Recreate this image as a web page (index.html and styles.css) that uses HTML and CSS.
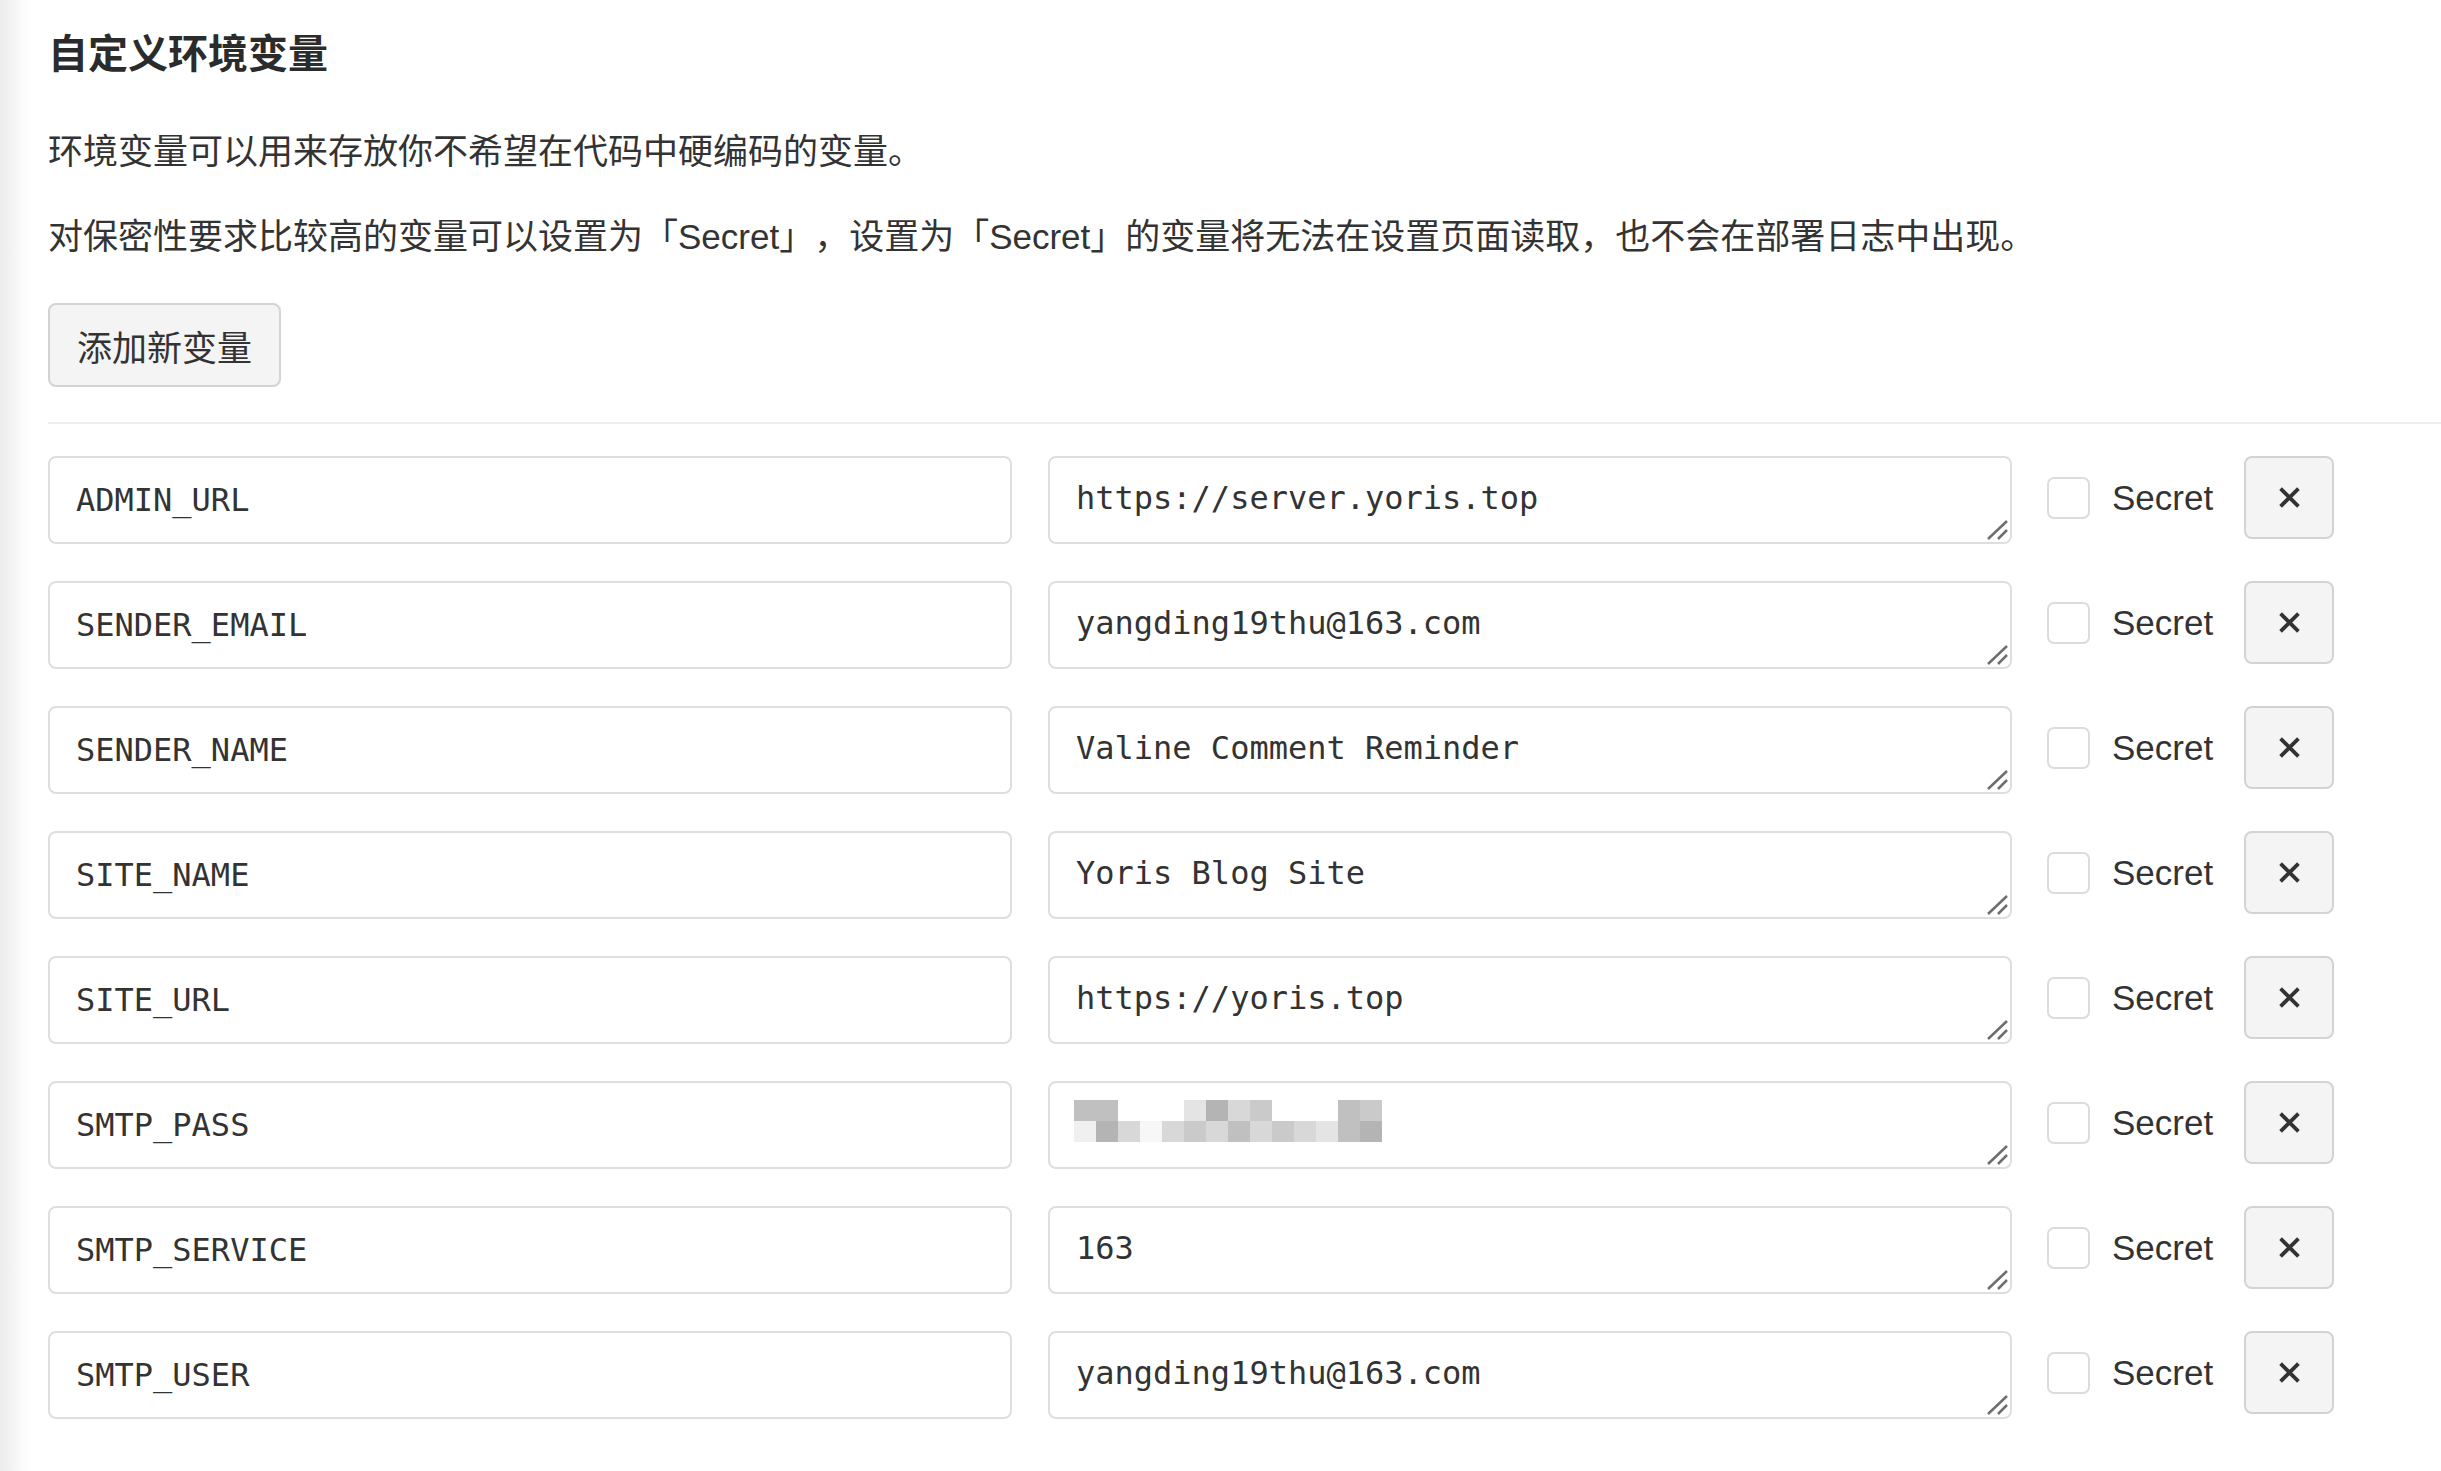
FILE: index.html
```html
<!DOCTYPE html>
<html lang="zh-CN">
<head>
<meta charset="utf-8">
<title>自定义环境变量</title>
<link rel="stylesheet" href="styles.css">
</head>
<body>
<div class="page">
  <h2 class="title">自定义环境变量</h2>
  <p class="desc">环境变量可以用来存放你不希望在代码中硬编码的变量。</p>
  <p class="desc desc-2">对保密性要求比较高的变量可以设置为「Secret」，设置为「Secret」的变量将无法在设置页面读取，也不会在部署日志中出现。</p>
  <button class="btn add-btn" type="button">添加新变量</button>
  <hr class="divider">
  <div class="env-list">

    <div class="env-row">
      <input class="env-name" type="text" value="ADMIN_URL">
      <div class="env-value-wrap">
        <textarea class="env-value">https://server.yoris.top</textarea>
        <svg class="grip" viewBox="0 0 26 26" width="26" height="26"><path d="M2 21 L21 3 M12 21 L21 12"/></svg>
      </div>
      <label class="secret"><input class="secret-box" type="checkbox"><span>Secret</span></label>
      <button class="btn del-btn" type="button"><svg viewBox="0 0 20 20" width="23" height="21"><path d="M1.5 1.5 L18.5 18.5 M18.5 1.5 L1.5 18.5"/></svg></button>
    </div>

    <div class="env-row">
      <input class="env-name" type="text" value="SENDER_EMAIL">
      <div class="env-value-wrap">
        <textarea class="env-value">yangding19thu@163.com</textarea>
        <svg class="grip" viewBox="0 0 26 26" width="26" height="26"><path d="M2 21 L21 3 M12 21 L21 12"/></svg>
      </div>
      <label class="secret"><input class="secret-box" type="checkbox"><span>Secret</span></label>
      <button class="btn del-btn" type="button"><svg viewBox="0 0 20 20" width="23" height="21"><path d="M1.5 1.5 L18.5 18.5 M18.5 1.5 L1.5 18.5"/></svg></button>
    </div>

    <div class="env-row">
      <input class="env-name" type="text" value="SENDER_NAME">
      <div class="env-value-wrap">
        <textarea class="env-value">Valine Comment Reminder</textarea>
        <svg class="grip" viewBox="0 0 26 26" width="26" height="26"><path d="M2 21 L21 3 M12 21 L21 12"/></svg>
      </div>
      <label class="secret"><input class="secret-box" type="checkbox"><span>Secret</span></label>
      <button class="btn del-btn" type="button"><svg viewBox="0 0 20 20" width="23" height="21"><path d="M1.5 1.5 L18.5 18.5 M18.5 1.5 L1.5 18.5"/></svg></button>
    </div>

    <div class="env-row">
      <input class="env-name" type="text" value="SITE_NAME">
      <div class="env-value-wrap">
        <textarea class="env-value">Yoris Blog Site</textarea>
        <svg class="grip" viewBox="0 0 26 26" width="26" height="26"><path d="M2 21 L21 3 M12 21 L21 12"/></svg>
      </div>
      <label class="secret"><input class="secret-box" type="checkbox"><span>Secret</span></label>
      <button class="btn del-btn" type="button"><svg viewBox="0 0 20 20" width="23" height="21"><path d="M1.5 1.5 L18.5 18.5 M18.5 1.5 L1.5 18.5"/></svg></button>
    </div>

    <div class="env-row">
      <input class="env-name" type="text" value="SITE_URL">
      <div class="env-value-wrap">
        <textarea class="env-value">https://yoris.top</textarea>
        <svg class="grip" viewBox="0 0 26 26" width="26" height="26"><path d="M2 21 L21 3 M12 21 L21 12"/></svg>
      </div>
      <label class="secret"><input class="secret-box" type="checkbox"><span>Secret</span></label>
      <button class="btn del-btn" type="button"><svg viewBox="0 0 20 20" width="23" height="21"><path d="M1.5 1.5 L18.5 18.5 M18.5 1.5 L1.5 18.5"/></svg></button>
    </div>

    <div class="env-row">
      <input class="env-name" type="text" value="SMTP_PASS">
      <div class="env-value-wrap">
        <textarea class="env-value"></textarea>
        <div class="mosaic">
          <span class="g2"></span><span class="g2"></span><span></span><span></span><span></span><span class="g5"></span><span class="g1"></span><span class="g4"></span><span class="g3"></span><span></span><span></span><span></span><span class="g2"></span><span class="g3"></span>
          <span class="g6"></span><span class="g1"></span><span class="g4"></span><span class="g7"></span><span class="g4"></span><span class="g3"></span><span class="g4"></span><span class="g2"></span><span class="g4"></span><span class="g3"></span><span class="g4"></span><span class="g5"></span><span class="g2"></span><span class="g1"></span>
        </div>
        <svg class="grip" viewBox="0 0 26 26" width="26" height="26"><path d="M2 21 L21 3 M12 21 L21 12"/></svg>
      </div>
      <label class="secret"><input class="secret-box" type="checkbox"><span>Secret</span></label>
      <button class="btn del-btn" type="button"><svg viewBox="0 0 20 20" width="23" height="21"><path d="M1.5 1.5 L18.5 18.5 M18.5 1.5 L1.5 18.5"/></svg></button>
    </div>

    <div class="env-row">
      <input class="env-name" type="text" value="SMTP_SERVICE">
      <div class="env-value-wrap">
        <textarea class="env-value">163</textarea>
        <svg class="grip" viewBox="0 0 26 26" width="26" height="26"><path d="M2 21 L21 3 M12 21 L21 12"/></svg>
      </div>
      <label class="secret"><input class="secret-box" type="checkbox"><span>Secret</span></label>
      <button class="btn del-btn" type="button"><svg viewBox="0 0 20 20" width="23" height="21"><path d="M1.5 1.5 L18.5 18.5 M18.5 1.5 L1.5 18.5"/></svg></button>
    </div>

    <div class="env-row">
      <input class="env-name" type="text" value="SMTP_USER">
      <div class="env-value-wrap">
        <textarea class="env-value">yangding19thu@163.com</textarea>
        <svg class="grip" viewBox="0 0 26 26" width="26" height="26"><path d="M2 21 L21 3 M12 21 L21 12"/></svg>
      </div>
      <label class="secret"><input class="secret-box" type="checkbox"><span>Secret</span></label>
      <button class="btn del-btn" type="button"><svg viewBox="0 0 20 20" width="23" height="21"><path d="M1.5 1.5 L18.5 18.5 M18.5 1.5 L1.5 18.5"/></svg></button>
    </div>

  </div>
</div>
</body>
</html>
```

FILE: styles.css
```css
html {
  background: linear-gradient(to right, #ececec 0, #f5f5f5 14px, #fcfcfc 24px, #ffffff 32px);
  min-height: 100%;
}

body {
  margin: 0;
  font-family: "Liberation Sans", "Noto Sans CJK SC", sans-serif;
  color: #333;
  text-spacing-trim: space-all;
}

.page {
  padding: 24px 0 40px 48px;
}

.title {
  margin: 0;
  font-size: 40px;
  line-height: 60px;
  font-weight: 700;
  color: #2b2b2b;
}

.desc {
  margin: 42px 0 0;
  font-size: 35px;
  line-height: 52px;
}

.desc-2 {
  margin-top: 33px;
}

.btn {
  font-family: inherit;
  color: #333;
  background: #f4f4f4;
  border: 2px solid #d3d3d3;
  border-radius: 8px;
  cursor: pointer;
}

.add-btn {
  display: block;
  margin-top: 40px;
  height: 84px;
  padding: 0 27px;
  font-size: 35px;
}

.divider {
  margin: 35px 0 0;
  border: 0;
  height: 2px;
  background: #efefef;
}

.env-list {
  margin-top: 32px;
  display: flex;
  flex-direction: column;
  gap: 37px;
}

.env-row {
  display: flex;
  align-items: flex-start;
}

.env-name {
  width: 964px;
  height: 88px;
  box-sizing: border-box;
  margin: 0;
  padding: 0 26px;
  border: 2px solid #dedede;
  border-radius: 8px;
  font-family: "DejaVu Sans Mono", monospace;
  font-size: 32px;
  color: #333;
  background: #fff;
  outline: none;
}

.env-value-wrap {
  position: relative;
  margin-left: 36px;
  width: 964px;
  height: 88px;
}

.env-value {
  display: block;
  width: 100%;
  height: 100%;
  box-sizing: border-box;
  margin: 0;
  padding: 16px 26px;
  border: 2px solid #dedede;
  border-radius: 8px;
  font-family: "DejaVu Sans Mono", monospace;
  font-size: 32px;
  line-height: 48px;
  color: #333;
  background: #fff;
  resize: none;
  overflow: hidden;
  outline: none;
}

.grip {
  position: absolute;
  right: 0;
  bottom: 0;
  fill: none;
  stroke: #6e6e6e;
  stroke-width: 2.5;
}

.mosaic {
  position: absolute;
  left: 26px;
  top: 19px;
  display: grid;
  grid-template-columns: repeat(14, 22px);
  grid-auto-rows: 21px;
}

.mosaic .g1 { background: #b4b4b4; }
.mosaic .g2 { background: #c0c0c0; }
.mosaic .g3 { background: #cacaca; }
.mosaic .g4 { background: #d8d8d8; }
.mosaic .g5 { background: #e4e4e4; }
.mosaic .g6 { background: #f0f0f0; }
.mosaic .g7 { background: #f7f7f7; }

.secret {
  margin-left: 35px;
  height: 83px;
  display: flex;
  align-items: center;
  gap: 22px;
  font-size: 35px;
  color: #333;
}

.secret-box {
  appearance: none;
  -webkit-appearance: none;
  margin: 0;
  width: 43px;
  height: 42px;
  border: 2px solid #dcdcdc;
  border-radius: 7px;
  background: #fff;
}

.del-btn {
  margin-left: 31px;
  width: 90px;
  height: 83px;
  padding: 0;
  display: flex;
  align-items: center;
  justify-content: center;
}

.del-btn svg {
  fill: none;
  stroke: #333;
  stroke-width: 3.6;
}
```
